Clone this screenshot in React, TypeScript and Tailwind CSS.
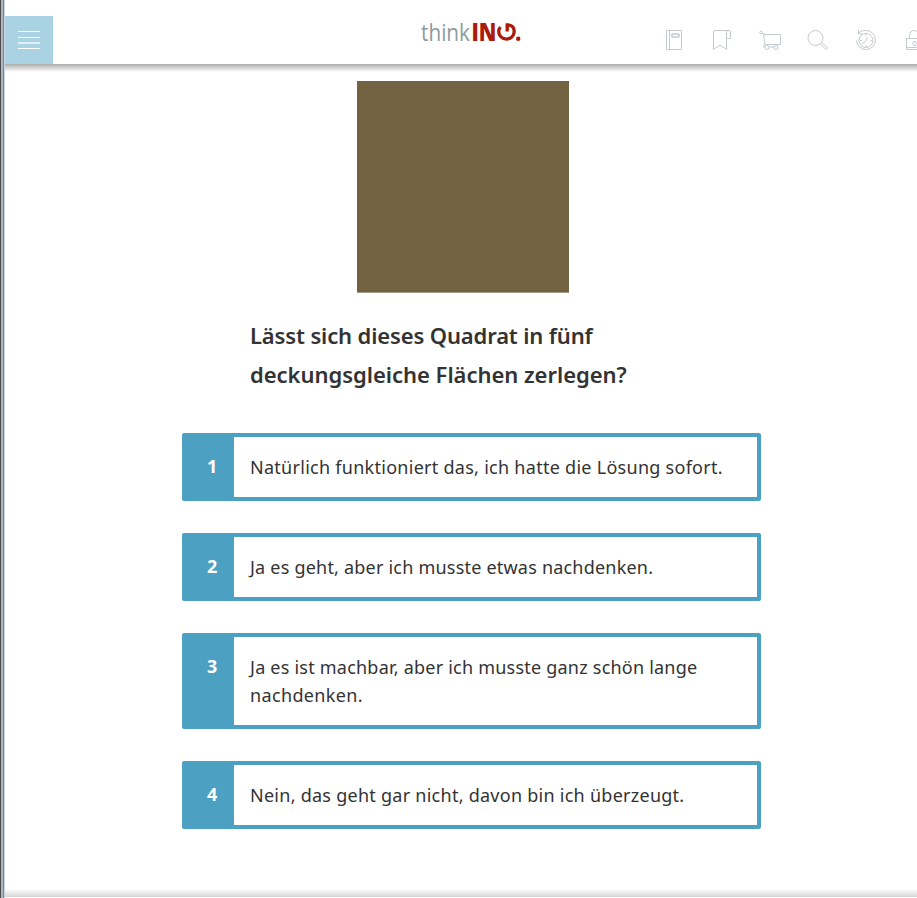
import React from "react";

const answers = [
  { id: 1, lines: [{ text: "Natürlich funktioniert das, ich hatte die Lösung sofort.", spacing: "tracking-[0.275px]" }] },
  { id: 2, lines: [{ text: "Ja es geht, aber ich musste etwas nachdenken.", spacing: "tracking-[0.21px]" }] },
  {
    id: 3,
    lines: [
      { text: "Ja es ist machbar, aber ich musste ganz schön lange", spacing: "tracking-[0.22px]" },
      { text: "nachdenken.", spacing: "tracking-[0.36px]" },
    ],
  },
  { id: 4, lines: [{ text: "Nein, das geht gar nicht, davon bin ich überzeugt.", spacing: "tracking-[0.26px]" }] },
];

function Icon({ children }: { children: React.ReactNode }) {
  return (
    <svg className="h-6 w-6 shrink-0" viewBox="0 0 24 24" fill="none" stroke="#c3cad0" strokeWidth="1">
      {children}
    </svg>
  );
}

function Logo() {
  return (
    <svg className="h-7 w-[102px] overflow-visible" viewBox="0 0 102 28">
      <text x="1" y="22.500" fontSize="24.5" fill="#8d9b9f" textLength="49" lengthAdjust="spacingAndGlyphs" fontFamily="Open Sans, sans-serif" fontWeight="400">think</text>
      <text x="51.500" y="22.800" fontSize="25" fill="#ab1b0c" textLength="25" lengthAdjust="spacingAndGlyphs" fontFamily="Open Sans, sans-serif" fontWeight="800">IN</text>
      <path d="M80.500 9Q78.700 11 78.700 13.500A7.700 7.500 0 0 0 94.200 13.500Q94.200 6.800 87 6.800M87.200 5.200V13.500" fill="none" stroke="#ab1b0c" strokeWidth="3.3" />
      <circle cx="98.200" cy="20.800" r="2.200" fill="#ab1b0c" />
    </svg>
  );
}

export default function App() {
  return (
    <div className="flex h-[898px] w-[917px] overflow-hidden bg-white font-['Noto_Sans','Open_Sans',sans-serif] text-[#333]">
      <div className="flex w-[5px] shrink-0">
        <div className="w-px bg-[#4c4a4b]" />
        <div className="w-px bg-[#b6b6b8]" />
        <div className="w-px bg-[#a9b5c0]" />
        <div className="w-px bg-[#74879a]" />
        <div className="w-px bg-[#c9d7e3]" />
      </div>
      <div className="flex w-[912px] shrink-0 flex-col">
        <header className="flex h-16 shrink-0">
          <button className="mt-4 flex h-12 w-12 shrink-0 items-center justify-center bg-[#a9d3e3]">
            <svg className="h-5 w-[22px]" viewBox="0 0 22 20" stroke="white">
              <path d="M0 1.500H22M0 7.500H22M0 18.500H22" />
              <path d="M0 13H22" strokeWidth="2" strokeOpacity="0.65" />
            </svg>
          </button>
          <div className="mt-[18px] ml-[367px] shrink-0"><Logo /></div>
          <nav className="mt-7 ml-[140px] flex shrink-0 gap-6">
            <Icon><path d="M4.500 2.500H19.500V21.500H4.500ZM7.500 2.500V21.500" /><rect x="10" y="6" width="7" height="3" rx="0.500" strokeWidth="1.500" /></Icon>
            <Icon><path d="M3.500 21.500V4Q3.500 2.500 5 2.500H19Q20.500 2.500 20.500 4V10.500H16.500V21.500L10 17ZM16.500 10.500V4Q16.500 2.500 18 2.500" /></Icon>
            <Icon><path d="M4 5L5.500 5.500L7 16.500H22.500V6.500H5.700M7 16.500Q4.500 17 6 19H7M11 19H16" /><circle cx="3" cy="4.500" r="1.300" /><circle cx="9" cy="19.500" r="2" /><circle cx="18" cy="19.500" r="2" /></Icon>
            <Icon><circle cx="9.500" cy="10" r="7.500" /><path d="M14.500 16L20 21.500L21.500 20L16 14.500" /></Icon>
            <Icon><path d="M5 4.500A9.500 9.500 0 0 1 12 2.500A9.500 9.500 0 1 1 2.500 12.500M4.500 2V6H8.500" /><circle cx="12" cy="12.500" r="7" /><path d="M12 12.500L8 16.500M12 12.500L13.500 9M12 6.500V8M12 17V19M6 12.500H7.500M16.500 12.500H18" /></Icon>
            <Icon><path d="M4.500 10.500H20.500V21.500H4.500ZM7.500 10.500V7A4.500 4.500 0 0 1 16.500 7V8M4.500 19.500H20.500" /><rect x="11" y="13.500" width="3" height="4" rx="1" /></Icon>
          </nav>
        </header>
        <div className="h-2 shrink-0 bg-linear-to-b from-[#acacac] to-white" />
        <main className="flex h-[817px] shrink-0 flex-col">
          <div className="mt-[9px] ml-[352px] h-[212px] w-[212px] border-b border-[#a59b85] bg-[#726242]" />
          <h1 className="mt-[23px] ml-[245px] text-[22px] leading-[39px] font-semibold whitespace-nowrap">
            <span className="block tracking-[-0.14px]">Lässt sich dieses Quadrat in fünf</span>
            <span className="block tracking-[-0.03px]">deckungsgleiche Flächen zerlegen?</span>
          </h1>
          <ol className="mt-[39px] ml-[177px] flex w-[579px] flex-col gap-8">
            {answers.map((a) => (
              <li key={a.id} className="flex rounded-[2px] border-4 border-[#4ca1c3] bg-[#4ca1c3] text-[18px] leading-7">
                <div className="w-12 shrink-0 pt-[15px] pl-[21px] font-bold text-white">{a.id}</div>
                <div className="flex-1 bg-white px-4 py-4 whitespace-nowrap">
                  {a.lines.map((line) => (
                    <span key={line.text} className={"block " + line.spacing}>{line.text}</span>
                  ))}
                </div>
              </li>
            ))}
          </ol>
        </main>
        <div className="h-2 shrink-0 bg-linear-to-b from-white to-[#d4d4d4]" />
      </div>
    </div>
  );
}
